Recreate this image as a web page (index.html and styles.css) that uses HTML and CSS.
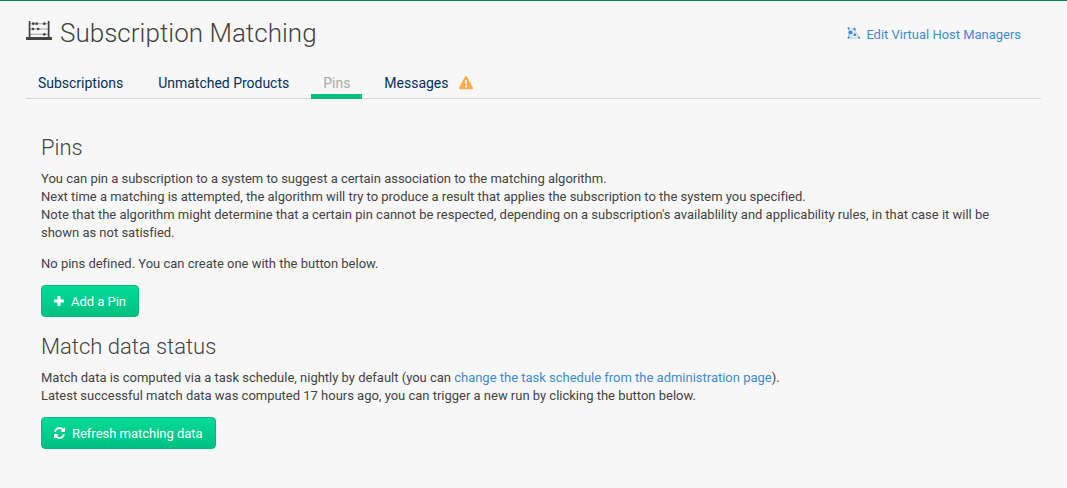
FILE: index.html
```html
<!DOCTYPE html>
<html lang="en">
<head>
<meta charset="utf-8">
<title>Subscription Matching</title>
<link rel="stylesheet" href="styles.css">
</head>
<body>
<main class="page">
  <header class="page-header">
    <h1 class="page-title">
      <svg class="icon-abacus" width="26" height="20" viewBox="0 0 26 20" fill="#434343">
        <path d="M0 17h26v3H0zM2.700 1h1.700v17H2.700zM21.800 1h1.700v17h-1.700z"/>
        <path d="M4 3.200h18v1H4zM4 8.500h18v1H4zM4 13.800h18v1H4z" opacity=".5"/>
        <circle cx="7.300" cy="3.700" r="1.350"/><circle cx="10.700" cy="3.700" r="1.350"/><circle cx="18.300" cy="3.700" r="1.350"/>
        <circle cx="7" cy="9" r="1.350"/><circle cx="12.200" cy="9" r="1.350"/><circle cx="18.300" cy="14.300" r="1.350"/>
      </svg>
      <span class="title-text">Subscription Matching</span>
    </h1>
    <a class="link edit-link" href="#">
      <svg class="icon-hosts" width="14" height="13" viewBox="0 0 14 13" fill="#428bca">
        <path d="M1.500 1.500L7.500 2L12.500 11H1.500L3.500 5.500zM1.500 1.500V11M7.500 2L8 7.500L12.500 11M3.500 5.500L7.500 2M3.500 5.500L8 7.500L1.500 11" fill="none" stroke="#428bca" stroke-width=".7" opacity=".5"/>
        <circle cx="1.500" cy="1.300" r="1"/><circle cx="7.500" cy="2" r="1.200"/><circle cx="3.600" cy="5.500" r="1.900"/><circle cx="7.900" cy="7.700" r="1.300"/><circle cx="1.500" cy="10.700" r="1"/><circle cx="12.300" cy="10.700" r="1"/>
      </svg>
      <span>Edit Virtual Host Managers</span>
    </a>
  </header>
  <nav class="tabs">
    <a class="tab" href="#">Subscriptions</a>
    <a class="tab" href="#">Unmatched Products</a>
    <a class="tab tab-active" href="#">Pins</a>
    <a class="tab tab-messages" href="#"><span>Messages</span>
      <svg class="icon-warning" width="14" height="14" viewBox="0 0 14 14">
        <path d="M7 0Q7.700 0 8.100.8L13.900 11.700Q14.500 13.300 13 13.300H1Q-.5 13.300.1 11.700L5.900.8Q6.300 0 7 0z" fill="#ffa94d"/>
        <path d="M5.900 4.200h2.200L7.900 8.500H6.100zM6 9.500h2v2H6z" fill="#f7f7f7"/>
      </svg>
    </a>
  </nav>
  <div class="content">
    <h2 class="heading">Pins</h2>
    <p class="text">You can pin a subscription to a system to suggest a certain association to the matching algorithm.<br>Next time a matching is attempted, the algorithm will try to produce a result that applies the subscription to the system you specified.<br>Note that the algorithm might determine that a certain pin cannot be respected, depending on a subscription's availablility and applicability rules, in that case it will be shown as not satisfied.</p>
    <p class="text text-action">No pins defined. You can create one with the button below.</p>
    <button class="button" type="button">
      <svg class="icon-plus" width="10" height="10" viewBox="0 0 10 10" fill="#fff"><path d="M3.500 0h3v3.500H10v3H6.500V10h-3V6.500H0v-3h3.500z"/></svg>
      <span class="button-label">Add a Pin</span>
    </button>
    <h2 class="heading">Match data status</h2>
    <p class="text text-action">Match data is computed via a task schedule, nightly by default (you can <a class="link" href="#">change the task schedule from the administration page</a>).<br>Latest successful match data was computed 17 hours ago, you can trigger a new run by clicking the button below.</p>
    <button class="button" type="button">
      <svg class="icon-refresh" width="11" height="12" viewBox="0 0 1536 1536" preserveAspectRatio="none" fill="#fff"><path d="M1511 928q0 5-1 7-64 268-268 434.500T764 1536q-146 0-282.500-55T238 1324l-129 129q-19 19-45 19t-45-19-19-45V960q0-26 19-45t45-19h448q26 0 45 19t19 45-19 45l-137 137q71 66 161 102t187 36q134 0 250-65t186-179q11-17 53-117 8-23 30-23h192q13 0 22.500 9.500t9.500 22.500zm25-800v448q0 26-19 45t-45 19h-448q-26 0-45-19t-19-45 19-45l138-138Q969 256 768 256q-134 0-250 65T332 500q-11 17-53 117-8 23-30 23H50q-13 0-22.500-9.500T18 608v-7q65-268 270-434.500T768 0q146 0 284 55.500T1297 212l130-129q19-19 45-19t45 19 19 45z"/></svg>
      <span class="button-label">Refresh matching data</span>
    </button>
  </div>
</main>
</body>
</html>
```
FILE: styles.css
```css
* { box-sizing: border-box; }
body {
  margin: 0;
  min-height: 488px;
  background: #f7f7f7;
  border-top: 1px solid #00855f;
  color: #434343;
  font-family: Roboto, "Liberation Sans", sans-serif;
  font-size: 13px;
  line-height: 18px;
}
.page { padding: 0 26px; }
.page-header {
  display: flex;
  justify-content: space-between;
  padding: 17px 20px 0 0;
  height: 66px;
}
.page-title {
  display: flex;
  gap: 8px;
  margin: 0;
  font-size: 26px;
  font-weight: 300;
  line-height: 30px;
  letter-spacing: 0.02px;
}
.icon-abacus { margin-top: 2px; }
.link { color: #428bca; text-decoration: none; }
.edit-link {
  display: flex;
  gap: 5px;
  padding-top: 8px;
  height: 26px;
  letter-spacing: -0.02px;
}
.icon-hosts { margin-top: 1px; }
.tabs {
  display: flex;
  gap: 11px;
  height: 32px;
  border-bottom: 1px solid #d9d9d9;
}
.tab {
  height: 32px;
  padding: 6px 12px 0;
  color: #02305a;
  font-size: 14px;
  line-height: 20px;
  letter-spacing: -0.015px;
  text-decoration: none;
}
.tab-active { margin-left: -1px; color: #aaa; border-bottom: 5px solid #00c081; }
.tab-messages { display: flex; gap: 11px; margin-left: -1px; }
.icon-warning { margin-top: 3px; }
.content { padding: 36px 15px 0; }
.heading {
  margin: 0 0 9px;
  font-size: 22px;
  font-weight: 300;
  line-height: 26px;
}
.text { margin: 0 0 13px; letter-spacing: -0.01px; }
.text-action { margin-bottom: 12px; }
.button {
  display: flex;
  align-items: center;
  gap: 7px;
  height: 32px;
  margin: 0 0 17px;
  padding: 0 12px;
  border: 1px solid #00b97c;
  border-radius: 4px;
  background: linear-gradient(#00dc96, #00c081);
  color: #fff;
  font: inherit;
  letter-spacing: -0.02px;
}
.button-label { padding-top: 1px; }
```
